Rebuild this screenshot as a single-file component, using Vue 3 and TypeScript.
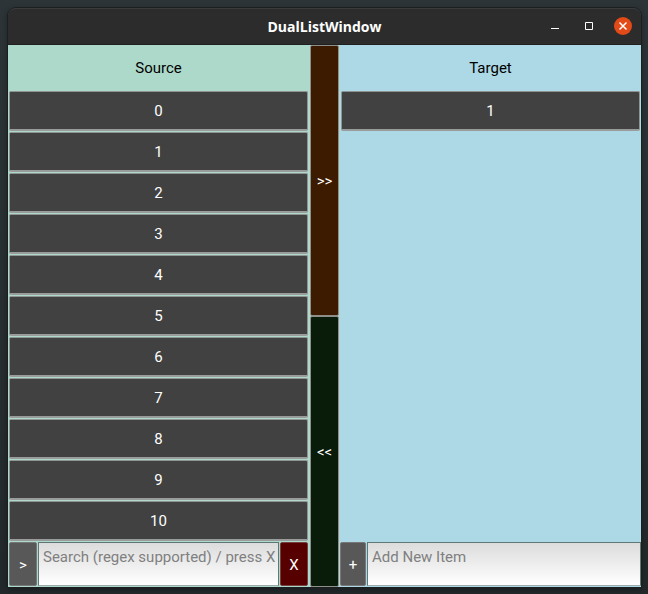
<script setup lang="ts">
import { computed, ref } from 'vue'

const source = ref<string[]>(Array.from({ length: 11 }, (_, i) => String(i)))
const target = ref<string[]>(['1'])
const picked = ref<string | null>(null)
const query = ref('')
const draft = ref('')

const visibleSource = computed(() => {
  if (!query.value) return source.value
  try {
    const pattern = new RegExp(query.value)
    return source.value.filter((item) => pattern.test(item))
  } catch {
    return source.value
  }
})

function moveRight() {
  if (picked.value !== null && !target.value.includes(picked.value)) target.value.push(picked.value)
}

function moveLeft() {
  target.value = target.value.filter((item) => item !== picked.value)
}

function addItem() {
  if (draft.value) target.value.push(draft.value)
  draft.value = ''
}
</script>

<template>
  <div class="desktop">
    <main class="window">
      <header class="titlebar">
        <h1 class="title">DualListWindow</h1>
        <div class="controls">
          <button class="control" type="button" aria-label="Minimize">
            <svg width="18" height="18" viewBox="0 0 18 18"><path d="M5 11.5h8" stroke="#fff" /></svg>
          </button>
          <button class="control" type="button" aria-label="Maximize">
            <svg width="18" height="18" viewBox="0 0 18 18"><path d="M5.5 5.5h7v7h-7z" fill="none" stroke="#fff" /></svg>
          </button>
          <button class="control close" type="button" aria-label="Close">
            <svg width="18" height="18" viewBox="0 0 18 18"><path d="M5.5 5.5l7 7M12.5 5.5l-7 7" stroke="#fff" stroke-width="1.5" /></svg>
          </button>
        </div>
      </header>

      <div class="content">
        <section class="panel source">
          <h2 class="heading">Source</h2>
          <ul class="list">
            <li v-for="item in visibleSource" :key="item">
              <button class="item" type="button" @click="picked = item">{{ item }}</button>
            </li>
          </ul>
          <div class="entry">
            <button class="key" type="button" aria-label="Search">&gt;</button>
            <input v-model="query" class="field" type="text" aria-label="Search" placeholder="Search (regex supported) / press X" />
            <button class="key clear" type="button" @click="query = ''">X</button>
          </div>
        </section>

        <div class="movers">
          <button class="mover right" type="button" @click="moveRight">&gt;&gt;</button>
          <button class="mover left" type="button" @click="moveLeft">&lt;&lt;</button>
        </div>

        <section class="panel target">
          <h2 class="heading">Target</h2>
          <ul class="list">
            <li v-for="item in target" :key="item">
              <button class="item" type="button" @click="picked = item">{{ item }}</button>
            </li>
          </ul>
          <div class="entry">
            <button class="key add" type="button" aria-label="Add" @click="addItem">+</button>
            <input v-model="draft" class="field" type="text" aria-label="Add New Item" placeholder="Add New Item" />
          </div>
        </section>
      </div>
    </main>
  </div>
</template>

<style>
body {
  background: #23292b;
}
</style>

<style scoped>
.desktop,
.desktop * {
  box-sizing: border-box;
}

.desktop {
  display: flex;
  min-height: 100vh;
  padding: 8px 7px 7px 8px;
  background: linear-gradient(#2c3437, #23292b);
  font-family: Roboto, "Liberation Sans", sans-serif;
  font-size: 15px;
}

button,
input {
  margin: 0;
  padding: 0;
  border-radius: 0;
  font: inherit;
}

.window {
  display: flex;
  flex: 1;
  flex-direction: column;
  min-width: 0;
  border-radius: 8px 8px 0 0;
  box-shadow: 0 0 0 1px #1b1f20, 0 2px 6px #0006;
}

.titlebar {
  display: grid;
  grid-template-columns: 1fr auto 1fr;
  align-items: center;
  height: 37px;
  padding: 0 9px 1px;
  border-top: 1px solid #3b3b3b;
  border-bottom: 1px solid #202020;
  border-radius: 8px 8px 0 0;
  background: #2c2c2c;
}

.title {
  grid-column: 2;
  margin: 0;
  padding-top: 2px;
  color: #fff;
  font-family: "Open Sans", "Noto Sans", sans-serif;
  font-size: 14px;
  font-weight: 700;
  line-height: 20px;
}

.controls {
  display: flex;
  justify-content: flex-end;
  gap: 16px;
}

.control {
  display: grid;
  place-items: center;
  width: 18px;
  height: 18px;
  border: 0;
  border-radius: 50%;
  background: none;
}

.close {
  background: #e24a17;
}

.content {
  display: grid;
  flex: 1;
  grid-template-columns: 1fr 31px 1fr;
}

.panel {
  display: flex;
  flex-direction: column;
  min-width: 0;
}

.source {
  background: #add9cb;
}

.target {
  background: #add8e6;
}

.heading {
  margin: 0;
  color: #000;
  font-size: 15px;
  font-weight: 400;
  line-height: 46px;
  text-align: center;
}

.list {
  display: flex;
  flex: 1;
  flex-direction: column;
  gap: 1px;
  margin: 0;
  padding: 0 1px 1px;
  list-style: none;
}

.item {
  display: block;
  width: 100%;
  height: 40px;
  border: 1px solid #8f9391;
  border-bottom: 2px solid #999c9b;
  border-radius: 2px;
  background: #414141;
  color: #fff;
}

.entry {
  display: flex;
  gap: 1px;
  height: 45px;
  padding-bottom: 1px;
}

.source .entry {
  padding: 0 1px 1px;
}

.key {
  flex: none;
  width: 28px;
  padding-top: 2px;
  border: 1px solid #777;
  border-radius: 2px;
  background: #585858;
  color: #fff;
}

.add {
  width: 26px;
}

.clear {
  border-color: #783f3d;
  background: #570000;
}

.field {
  flex: 1;
  min-width: 0;
  padding: 0 2px 15px 4px;
  border: 1px solid #5f7777;
  border-bottom-color: #9eabac;
  background: linear-gradient(#dcdcdc, #fff);
  color: #000;
}

.field::placeholder {
  color: #808080;
  opacity: 1;
}

.movers {
  display: grid;
  grid-template-rows: 1fr 1fr;
  padding: 0 1px;
  background: #b3d6d5;
}

.mover {
  border: 1px solid #8d8f88;
  border-radius: 2px;
  color: #fff;
}

.right {
  background: #3d1b00;
}

.left {
  background: #091b09;
}
</style>
